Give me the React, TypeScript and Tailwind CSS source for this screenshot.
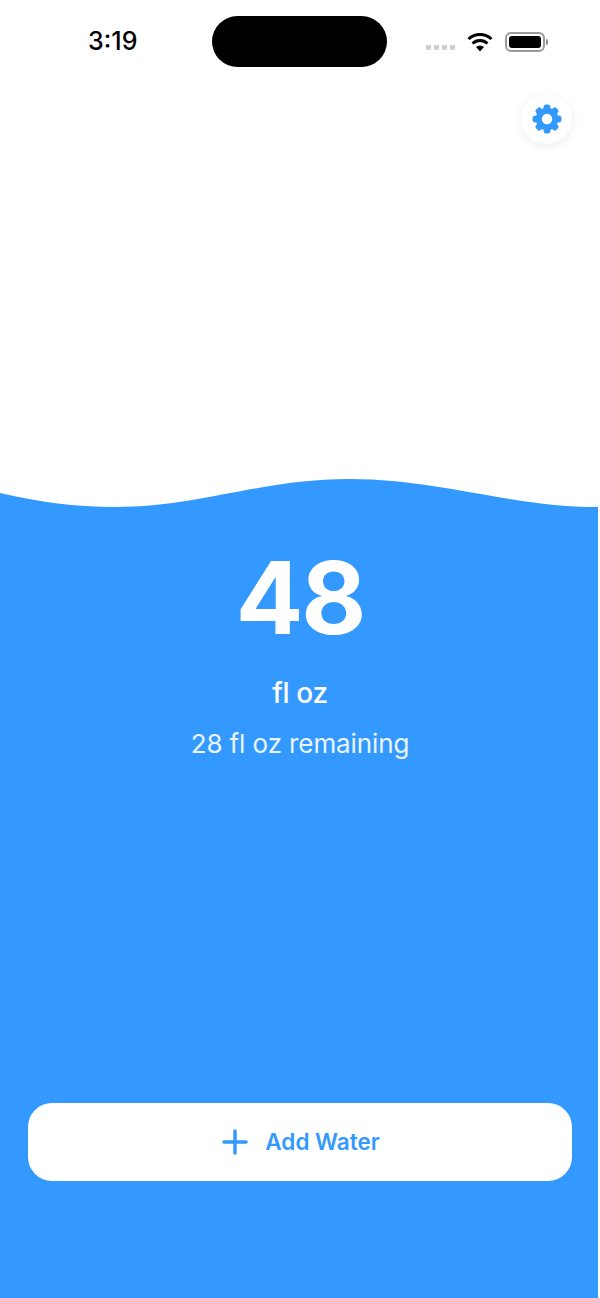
import React from 'react';

const StatusIcons: React.FC = () => (
  <div className="flex items-center">
    {/* Signal placeholder dots */}
    <div className="flex gap-[3px] mt-[11px]">
      {[0, 1, 2, 3].map((dot) => (
        <span key={dot} className="w-[5px] h-[5px] rounded-[1px] bg-[#cfcfcf]" />
      ))}
    </div>
    <svg className="ml-[11px]" width="28" height="20" viewBox="0 0 28 20">
      <path d="M14 19.5 L10 15 A6 6 0 0 1 18 15 Z" fill="#000" />
      <path d="M6.5 11.5 A11 11 0 0 1 21.5 11.5" fill="none" stroke="#000" strokeWidth="3" />
      <path d="M2.5 7 A17 17 0 0 1 25.5 7" fill="none" stroke="#000" strokeWidth="3" />
    </svg>
    <div className="ml-[11px] flex items-center">
      <div className="w-[40px] h-[20px] rounded-[6px] border-2 border-[#9a9a9a] p-[2px]">
        <div className="w-full h-full rounded-[3px] bg-black" />
      </div>
      <span className="ml-[1px] w-[2px] h-[6px] rounded-r-sm bg-[#8e8e8e]" />
    </div>
  </div>
);

// Eight-tooth gear, the hole is left open so the button shows through
const GearIcon: React.FC = () => (
  <svg width="32" height="32" viewBox="0 0 32 32" fill="#3399ff">
    <defs>
      <mask id="gear-hole">
        <rect width="32" height="32" fill="#fff" />
        <circle cx="16" cy="16" r="5.2" fill="#000" />
      </mask>
    </defs>
    <g mask="url(#gear-hole)">
      <circle cx="16" cy="16" r="11.2" />
      {[0, 45, 90, 135, 180, 225, 270, 315].map((angle) => (
        <rect key={angle} x="12.6" y="1.6" width="6.8" height="8" rx="2.6" transform={`rotate(${angle} 16 16)`} />
      ))}
    </g>
  </svg>
);

const App: React.FC = () => {
  return (
    <div className="w-[600px] h-[1298px] flex flex-col overflow-hidden bg-white font-['Inter',sans-serif]">
      {/* Status bar */}
      <div className="flex items-center h-[51px] mt-[16px] shrink-0">
        <span className="ml-[88px] w-[124px] text-[25px] font-medium leading-none text-black">3:19</span>
        <div className="w-[175px] h-[51px] rounded-full bg-black" />
        <div className="ml-[39px]">
          <StatusIcons />
        </div>
      </div>

      {/* Settings */}
      <div className="flex justify-end pr-[28px] pt-[27px] flex-1">
        <button className="w-[51px] h-[50px] rounded-full bg-white shadow-[0_2px_10px_rgba(0,0,0,0.08)] flex items-center justify-center">
          <GearIcon />
        </button>
      </div>

      {/* Wave */}
      <svg className="block shrink-0" width="600" height="30" viewBox="0 0 600 30">
        <path d="M0 15 C 40 24, 75 29, 115 29 C 200 29, 260 1, 350 1 C 440 1, 510 29, 598 29 V30 H0 Z" fill="#3399ff" />
      </svg>

      {/* Water */}
      <div className="w-[598px] h-[790px] shrink-0 bg-[#3399ff] flex flex-col items-center text-white">
        <div className="mt-[30px] ml-[2px] text-[100px] leading-[120px] font-bold tracking-[-2px]">48</div>
        <div className="mt-[18px] ml-[2px] text-[28px] leading-[34px] font-medium tracking-[-0.3px]">fl oz</div>
        <div className="mt-[17px] ml-[2px] text-[26px] leading-[34px] text-white/90 tracking-[-0.1px]">28 fl oz remaining</div>

        <button className="mt-auto mb-[117px] ml-[2px] pl-[2px] w-[544px] h-[78px] rounded-[24px] bg-white flex items-center justify-center gap-[17px] text-[#3399ff]">
          <svg width="26" height="26" viewBox="0 0 26 26" fill="none" stroke="currentColor" strokeWidth="3.5" strokeLinecap="round">
            <path d="M13 2 V24 M2 13 H24" />
          </svg>
          <span className="text-[22.5px] font-semibold leading-none">Add Water</span>
        </button>
      </div>
    </div>
  );
};

export default App;
